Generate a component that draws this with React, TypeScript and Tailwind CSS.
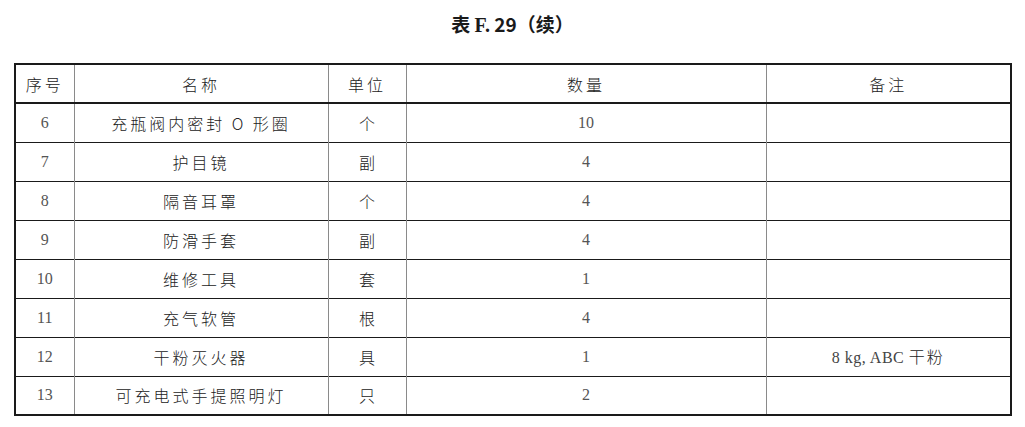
import React from 'react';

type Row = { no: string; name: string; unit: string; qty: string; note?: string };

const ROWS: Row[] = [
  { no: '6', name: '充瓶阀内密封 O 形圈', unit: '个', qty: '10' },
  { no: '7', name: '护目镜', unit: '副', qty: '4' },
  { no: '8', name: '隔音耳罩', unit: '个', qty: '4' },
  { no: '9', name: '防滑手套', unit: '副', qty: '4' },
  { no: '10', name: '维修工具', unit: '套', qty: '1' },
  { no: '11', name: '充气软管', unit: '根', qty: '4' },
  { no: '12', name: '干粉灭火器', unit: '具', qty: '1', note: '8 kg,ABC 干粉' },
  { no: '13', name: '可充电式手提照明灯', unit: '只', qty: '2' },
];

const serif = "font-['Liberation_Serif','Noto_Sans_CJK_SC',serif]";
const cjk = "font-['Noto_Sans_CJK_SC','Liberation_Serif',sans-serif]";

const App: React.FC = () => {
  return (
    <div className="w-[1025px] h-[427px] bg-white pt-[13px]">
      <h2 className={`text-center text-[19px] leading-[22px] font-bold text-[#1a1a1a] ${cjk}`}>
        表 <span className={`${serif} text-[20px]`}>F.</span> 29（续）
      </h2>

      <table className="ml-[14px] mt-[27px] w-[998px] table-fixed border-collapse border-2 border-[#1a1a1a]">
        <colgroup>
          <col className="w-[59px]" />
          <col className="w-[254px]" />
          <col className="w-[78px]" />
          <col className="w-[360px]" />
          <col />
        </colgroup>
        <thead>
          <tr className={`h-[39px] border-b-2 border-[#1a1a1a] text-[16px] text-[#222] tracking-[3px] ${cjk}`}>
            <th className="font-light border-r border-[#8a8a8a]">序号</th>
            <th className="font-light border-r border-[#8a8a8a]">名称</th>
            <th className="font-light border-r border-[#8a8a8a]">单位</th>
            <th className="font-light border-r border-[#8a8a8a]">数量</th>
            <th className="font-light">备注</th>
          </tr>
        </thead>
        <tbody>
          {ROWS.map(r => (
            <tr key={r.no} className="h-[39px] border-b border-[#1a1a1a] text-center">
              <td className={`border-r border-[#8a8a8a] text-[16px] text-[#555] ${serif}`}>{r.no}</td>
              <td className={`border-r border-[#8a8a8a] text-[16px] text-[#222] tracking-[3px] font-light ${cjk}`}>{r.name}</td>
              <td className={`border-r border-[#8a8a8a] text-[16px] text-[#222] font-light ${cjk}`}>{r.unit}</td>
              <td className={`border-r border-[#8a8a8a] text-[16px] text-[#555] ${serif}`}>{r.qty}</td>
              <td className={`text-[16px] text-[#444] tracking-[0.5px] ${serif}`}>
                {r.note && (
                  <>
                    8 kg, ABC <span className={`font-light tracking-[2px] text-[#222] ${cjk}`}>干粉</span>
                  </>
                )}
              </td>
            </tr>
          ))}
        </tbody>
      </table>
    </div>
  );
};

export default App;
